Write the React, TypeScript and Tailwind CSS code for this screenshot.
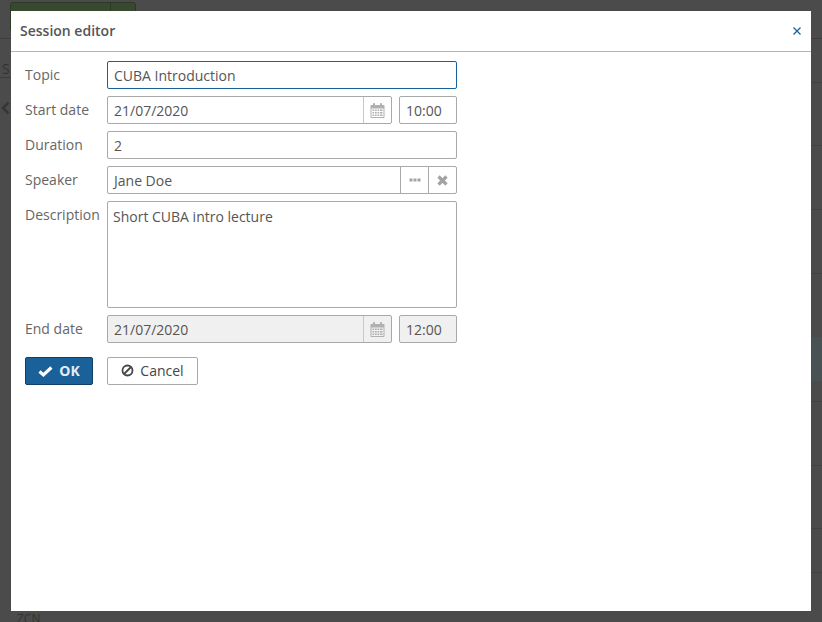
import React from "react";

const Calendar = () => (
  <svg width="15" height="15" viewBox="0 0 15 15" className="text-[#b0b0b0]">
    <path fill="currentColor" fillRule="evenodd" d="M3 2V1.200C3 .5 3.400 0 4 0s1 .5 1 1.200V2h5v-.8c0-.7.4-1.200 1-1.200s1 .5 1 1.200V2h1.800c.4 0 .7.3.7.7v11.600c0 .4-.3.7-.7.7H1.200c-.4 0-.7-.3-.7-.7V2.700c0-.4.3-.7.7-.7zM1.500 5.500v8.500h12V5.500zM2.500 6.500h1.700v1.500H2.500zM5 6.500h1.700v1.500H5zM7.500 6.500h1.700v1.500H7.500zM10 6.500h2.500v1.500H10zM2.500 9h1.700v1.500H2.500zM5 9h1.700v1.500H5zM7.500 9h1.700v1.500H7.500zM10 9h2.500v1.500H10zM2.500 11.500h1.700V13H2.500zM5 11.500h1.700V13H5zM7.500 11.500h1.700V13H7.500zM10 11.500h2.500V13H10z" />
  </svg>
);

const DateField = ({ value, disabled }: { value: string; disabled?: boolean }) => (
  <div className={`flex h-7 w-[285px] rounded-[2px] border border-[#a9a9a9] ${disabled ? "bg-[#f0f0f0]" : "bg-white"}`}>
    <div className="flex-1 pl-[6px] leading-[27px] text-[#555555]">{value}</div>
    <div className="flex w-7 items-center justify-center border-l border-[#c8c8c8]">
      <Calendar />
    </div>
  </div>
);

const TimeField = ({ value, disabled }: { value: string; disabled?: boolean }) => (
  <div className={`ml-[7px] h-7 w-[58px] rounded-[2px] border border-[#a9a9a9] pl-[6px] leading-[27px] text-[#555555] ${disabled ? "bg-[#f0f0f0]" : "bg-white"}`}>
    {value}
  </div>
);

const Row = ({ label, children }: { label: string; children: React.ReactNode }) => (
  <div className="flex items-start">
    <div className="w-[82px] leading-[27px] text-[#666666]">{label}</div>
    {children}
  </div>
);

const background = [82, 145, 209, 273, 337, 401, 465, 528, 572];

export default function App() {
  return (
    <div
      className="relative h-[622px] w-[822px] overflow-hidden bg-[#4b4b4b] text-[14px]"
      style={{ fontFamily: '"Open Sans", sans-serif' }}
    >
      {/* dimmed application behind the modal */}
      <div className="h-[39px] border-b border-[#3d3d3d] pl-[10px] pt-[2px]">
        <div className="flex h-[30px] w-[126px] rounded-[3px] border border-[#2b3a25] bg-[#37492f]">
          <div className="flex-1 border-r border-[#2b3a25]" />
          <div className="w-6" />
        </div>
      </div>
      {background.map((y) => (
        <div key={y} className="absolute right-0 h-[1px] w-[11px] bg-[#414141]" style={{ top: y }} />
      ))}
      <div className="absolute right-0 top-[337px] h-[44px] w-[11px] bg-[#485154]" />
      <div className="absolute left-0 top-[77px] h-[1px] w-[11px] bg-[#2d3f4d]" />
      <div className="absolute left-[2px] top-[58px] text-[#333]">S</div>
      <svg className="absolute left-[1px] top-[101px]" width="9" height="14" viewBox="0 0 9 14">
        <path d="M7.500 1.500L2 7l5.500 5.500" fill="none" stroke="#363636" strokeWidth="2.500" />
      </svg>
      <div className="absolute left-[17px] top-[616px] text-[12px] leading-[6px] text-[#333]">ZCN</div>

      {/* modal window */}
      <div className="absolute left-[11px] top-[11px] h-[600px] w-[800px] bg-white">
        <div className="flex h-[41px] items-center justify-between border-b border-[#b5b5b5] pl-[9px] pr-[9px]">
          <span className="font-semibold leading-[40px] text-[#555555]">Session editor</span>
          <svg width="10" height="10" viewBox="0 0 10 10">
            <path d="M1.500 1.500l7 7M8.500 1.500l-7 7" stroke="#1b6199" strokeWidth="1.300" />
          </svg>
        </div>
        <div className="flex flex-col gap-[7px] pl-[14px] pt-[9px]">
          <Row label="Topic">
            <div className="h-7 w-[350px] rounded-[2px] border border-[#1b6199] pl-[6px] leading-[27px] text-[#555555]">
              CUBA Introduction
            </div>
          </Row>
          <Row label="Start date">
            <DateField value="21/07/2020" />
            <TimeField value="10:00" />
          </Row>
          <Row label="Duration">
            <div className="h-7 w-[350px] rounded-[2px] border border-[#a9a9a9] pl-[6px] leading-[27px] text-[#555555]">2</div>
          </Row>
          <Row label="Speaker">
            <div className="flex h-7 w-[350px] rounded-[2px] border border-[#a9a9a9]">
              <div className="flex-1 pl-[6px] leading-[27px] text-[#555555]">Jane Doe</div>
              <div className="flex w-7 items-center justify-center border-l border-[#a9a9a9]">
                <svg width="12" height="4" viewBox="0 0 12 4">
                  <path d="M0.500 .5h3v3h-3zM4.500 .5h3v3h-3zM8.500 .5h3v3h-3z" fill="#a3a3a3" />
                </svg>
              </div>
              <div className="flex w-7 items-center justify-center border-l border-[#a9a9a9]">
                <svg width="11" height="11" viewBox="0 0 11 11">
                  <path d="M1.500 1.500l8 8M9.500 1.500l-8 8" stroke="#a3a3a3" strokeWidth="3.200" />
                </svg>
              </div>
            </div>
          </Row>
          <Row label="Description">
            <div className="h-[107px] w-[350px] rounded-[2px] border border-[#a9a9a9] pl-[5px] pt-[4px] leading-[22px] text-[#555555]">
              Short CUBA intro lecture
            </div>
          </Row>
          <Row label="End date">
            <DateField value="21/07/2020" disabled />
            <TimeField value="12:00" disabled />
          </Row>
          <div className="mt-[7px] flex gap-[14px]">
            <div className="flex h-7 w-[68px] items-center justify-center gap-[6px] rounded-[2px] border border-[#123f63] bg-[#1b6199] font-bold leading-[24px] text-[#e4edf4]">
              <svg width="15" height="11" viewBox="0 0 15 11">
                <path d="M1.500 5.500l3.900 3.400 8-7.400" fill="none" stroke="#fff" strokeWidth="3.200" />
              </svg>
              <span>OK</span>
            </div>
            <div className="flex h-7 w-[91px] items-center justify-center gap-[6px] rounded-[2px] border border-[#a9a9a9] bg-white pb-[1px] font-medium text-[#464646]">
              <svg width="13" height="13" viewBox="0 0 13 13">
                <circle cx="6.500" cy="6.500" r="5" fill="none" stroke="#464646" strokeWidth="1.800" />
                <path d="M3 10l7-7" stroke="#464646" strokeWidth="1.800" />
              </svg>
              <span>Cancel</span>
            </div>
          </div>
        </div>
      </div>
    </div>
  );
}
